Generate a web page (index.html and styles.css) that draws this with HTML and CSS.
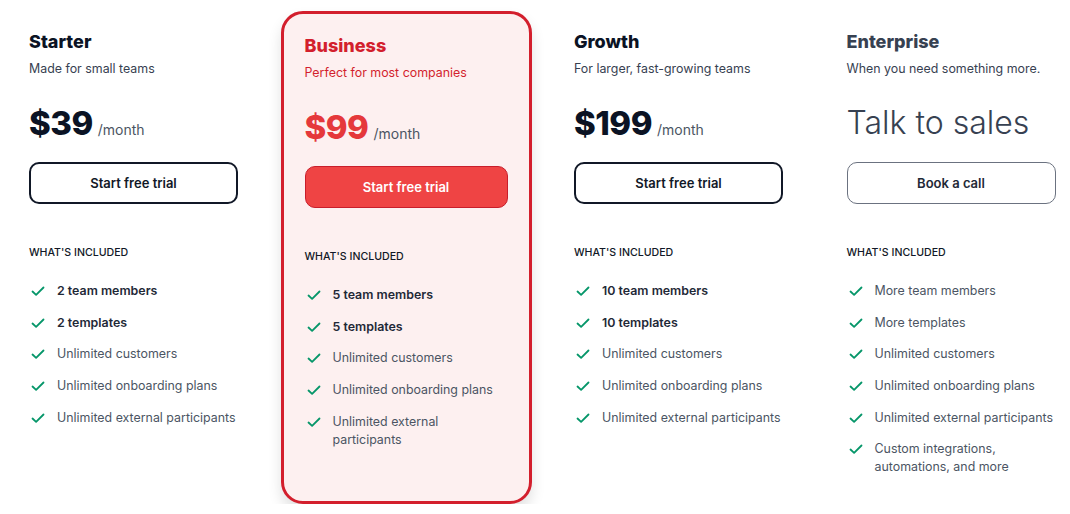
FILE: index.html
```html
<!DOCTYPE html>
<html lang="en">
<head>
    <meta charset="UTF-8">
    <meta name="viewport" content="width=device-width, initial-scale=1.0">
    <title>Pricing</title>
    <link rel="stylesheet" href="styles.css">
</head>
<body>
    <div class="plans">
        <!-- Starter -->
        <div class="plan">
            <h3 class="plan-name">Starter</h3>
            <p class="plan-desc">Made for small teams</p>
            <p class="price"><span class="amount">$39</span> <span class="per">/month</span></p>
            <a class="btn">Start free trial</a>
            <p class="included">What's included</p>
            <ul class="features">
                <li class="strong">2 team members</li>
                <li class="strong">2 templates</li>
                <li>Unlimited customers</li>
                <li>Unlimited onboarding plans</li>
                <li>Unlimited external participants</li>
            </ul>
        </div>

        <!-- Business -->
        <div class="plan featured">
            <h3 class="plan-name">Business</h3>
            <p class="plan-desc">Perfect for most companies</p>
            <p class="price"><span class="amount">$99</span> <span class="per">/month</span></p>
            <a class="btn">Start free trial</a>
            <p class="included">What's included</p>
            <ul class="features">
                <li class="strong">5 team members</li>
                <li class="strong">5 templates</li>
                <li>Unlimited customers</li>
                <li>Unlimited onboarding plans</li>
                <li>Unlimited external participants</li>
            </ul>
        </div>

        <!-- Growth -->
        <div class="plan">
            <h3 class="plan-name">Growth</h3>
            <p class="plan-desc">For larger, fast-growing teams</p>
            <p class="price"><span class="amount">$199</span> <span class="per">/month</span></p>
            <a class="btn">Start free trial</a>
            <p class="included">What's included</p>
            <ul class="features">
                <li class="strong">10 team members</li>
                <li class="strong">10 templates</li>
                <li>Unlimited customers</li>
                <li>Unlimited onboarding plans</li>
                <li>Unlimited external participants</li>
            </ul>
        </div>

        <!-- Enterprise -->
        <div class="plan enterprise">
            <h3 class="plan-name">Enterprise</h3>
            <p class="plan-desc">When you need something more.</p>
            <p class="price"><span class="talk">Talk to sales</span></p>
            <a class="btn">Book a call</a>
            <p class="included">What's included</p>
            <ul class="features">
                <li>More team members</li>
                <li>More templates</li>
                <li>Unlimited customers</li>
                <li>Unlimited onboarding plans</li>
                <li>Unlimited external participants</li>
                <li>Custom integrations, automations, and more</li>
            </ul>
        </div>
    </div>
</body>
</html>
```

FILE: styles.css
```css
/* base */
* {
    box-sizing: border-box;
}

body {
    margin: 0;
    background-color: #fff;
    font-family: 'Inter', 'Noto Sans', sans-serif;
    color: #111827;
}

.plans {
    display: grid;
    grid-template-columns: repeat(4, 209px);
    column-gap: 63.5px;
    align-items: start;
    padding: 31px 0 0 29px;
}

.plan-name {
    margin: 0;
    font-size: 18px;
    line-height: 22px;
    font-weight: 800;
    color: #0b1324;
}

.plan-desc {
    margin: 6px 0 0;
    font-size: 12.4px;
    line-height: 20px;
    color: #374151;
}

.price {
    display: flex;
    align-items: baseline;
    gap: 5px;
    margin: 24px 0 0;
    height: 44px;
}

.amount {
    font-size: 33px;
    font-weight: 800;
    letter-spacing: -0.5px;
    color: #0b1324;
}

.per {
    font-size: 14px;
    color: #4b5563;
}

.talk {
    font-size: 32px;
    font-weight: 300;
    color: #374151;
}

.btn {
    display: flex;
    align-items: center;
    justify-content: center;
    height: 42px;
    margin-top: 15px;
    border: 2px solid #111827;
    border-radius: 10px;
    font-size: 13px;
    font-weight: 600;
    color: #111827;
    cursor: pointer;
}

.included {
    margin: 42px 0 0;
    font-size: 10.6px;
    line-height: 14px;
    font-weight: 500;
    text-transform: uppercase;
    color: #111827;
}

.features {
    list-style: none;
    margin: 22px 0 0;
    padding: 0;
}

.features li {
    position: relative;
    padding-left: 28px;
    margin-bottom: 13.7px;
    font-size: 12.4px;
    line-height: 18px;
    color: #4b5563;
}

.features li::before {
    content: "";
    position: absolute;
    left: 2px;
    top: 2px;
    width: 14px;
    height: 14px;
    background: url("data:image/svg+xml;utf8,<svg xmlns='http://www.w3.org/2000/svg' viewBox='0 0 14 14'><path d='M1.5 7.5l3.6 3.4L12.5 3.5' fill='none' stroke='%23059669' stroke-width='1.8' stroke-linecap='round' stroke-linejoin='round'/></svg>") no-repeat center;
}

.features li.strong {
    font-weight: 600;
    color: #1f2937;
}

/* featured card */
.featured {
    margin: -20px -21px 0;
    padding: 21px 21px 39px;
    border: 3px solid #d31f2d;
    border-radius: 22px;
    background-color: #fdf0f0;
    box-shadow: 0 8px 14px rgba(0, 0, 0, 0.12);
}

.featured .plan-name,
.featured .plan-desc {
    color: #d31f2d;
}

.featured .amount {
    color: #e5383b;
}

.featured .btn {
    background-color: #ef4444;
    border: 1px solid #c81e2b;
    color: #fff;
}

/* enterprise */
.enterprise .plan-name {
    color: #374151;
}

.enterprise .btn {
    border: 1.5px solid #6b7280;
    color: #1f2937;
}
```
